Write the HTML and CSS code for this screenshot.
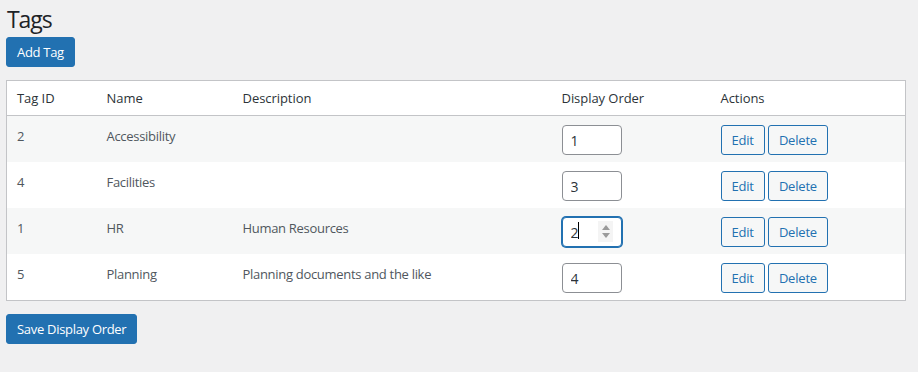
FILE: index.html
```html
<!DOCTYPE html>
<html lang="en">
<head>
<meta charset="utf-8">
<title>Tags</title>
<link rel="stylesheet" href="styles.css">
</head>
<body>
<div class="wrap">
  <h1 class="page-title">Tags</h1>
  <a class="button button-primary" href="#">Add Tag</a>
  <table class="widefat striped">
    <colgroup>
      <col class="c-id"><col class="c-name"><col class="c-desc"><col class="c-order"><col class="c-actions">
    </colgroup>
    <thead>
      <tr><th>Tag ID</th><th>Name</th><th>Description</th><th>Display Order</th><th>Actions</th></tr>
    </thead>
    <tbody>
      <tr>
        <td>2</td><td>Accessibility</td><td></td>
        <td><span class="num"><input class="order" type="number" value="1"></span></td>
        <td><a class="button" href="#">Edit</a> <a class="button" href="#">Delete</a></td>
      </tr>
      <tr>
        <td>4</td><td>Facilities</td><td></td>
        <td><span class="num"><input class="order" type="number" value="3"></span></td>
        <td><a class="button" href="#">Edit</a> <a class="button" href="#">Delete</a></td>
      </tr>
      <tr>
        <td>1</td><td>HR</td><td>Human Resources</td>
        <td><span class="num is-focused"><input class="order" type="number" value="2"><span class="caret"></span><span class="spin"><span class="up"></span><span class="down"></span></span></span></td>
        <td><a class="button" href="#">Edit</a> <a class="button" href="#">Delete</a></td>
      </tr>
      <tr>
        <td>5</td><td>Planning</td><td>Planning documents and the like</td>
        <td><span class="num"><input class="order" type="number" value="4"></span></td>
        <td><a class="button" href="#">Edit</a> <a class="button" href="#">Delete</a></td>
      </tr>
    </tbody>
  </table>
  <div class="submit">
    <a class="button button-primary" href="#">Save Display Order</a>
  </div>
</div>
</body>
</html>
```
FILE: styles.css
```css
html, body {
  margin: 0;
  padding: 0;
  background: #f0f0f1;
}
body {
  font-family: "Open Sans", "Noto Sans", "Liberation Sans", sans-serif;
  font-size: 13px;
  line-height: 1.4;
  letter-spacing: -0.3px;
  color: #3c434a;
}
.wrap {
  padding: 4px 12px 0 6px;
}
.page-title {
  font-size: 23px;
  font-weight: 400;
  line-height: 30px;
  letter-spacing: -1.1px;
  margin: 0 0 3px 1px;
  color: #1d2327;
}
.button {
  display: inline-block;
  box-sizing: border-box;
  height: 30px;
  line-height: 28px;
  padding: 0 10px;
  font-size: 13px;
  letter-spacing: -0.2px;
  text-decoration: none;
  border: 1px solid #2271b1;
  border-radius: 3px;
  background: #f6f7f7;
  color: #2271b1;
  vertical-align: top;
  white-space: nowrap;
}
.button-primary {
  background: #2271b1;
  color: #fff;
  letter-spacing: -0.3px;
}
.widefat {
  margin-top: 13px;
  width: 100%;
  table-layout: fixed;
  border-collapse: collapse;
  border: 1px solid #c3c4c7;
  background: #fff;
}
.c-id { width: 90px; }
.c-name { width: 136px; }
.c-desc { width: 319px; }
.c-order { width: 159px; }
.widefat th {
  text-align: left;
  font-weight: 400;
  letter-spacing: -0.05px;
  color: #2c3338;
  padding: 8px 10px;
  height: 18px;
  line-height: 18px;
  border-bottom: 1px solid #c3c4c7;
}
.widefat td {
  padding: 9px 10px 7px;
  height: 30px;
  line-height: 22px;
  vertical-align: top;
  color: #50575e;
}
.striped tbody tr:nth-child(odd) {
  background: #f6f7f7;
}
.num {
  position: relative;
  display: inline-block;
  vertical-align: top;
}
.order {
  box-sizing: border-box;
  width: 60px;
  height: 30px;
  margin: 0;
  padding: 0 8px;
  font-family: inherit;
  font-size: 14px;
  letter-spacing: 0;
  color: #2c3338;
  background: #fff;
  border: 1px solid #8c8f94;
  border-radius: 4px;
  outline: none;
  -moz-appearance: textfield;
  appearance: textfield;
  display: block;
}
.order::-webkit-inner-spin-button,
.order::-webkit-outer-spin-button {
  -webkit-appearance: none;
  margin: 0;
}
.is-focused .order {
  border-color: #2271b1;
  box-shadow: 0 0 0 1px #2271b1;
}
.caret {
  position: absolute;
  left: 16px;
  top: 5px;
  width: 1px;
  height: 17px;
  background: #000;
}
.spin {
  position: absolute;
  left: 36px;
  top: 4px;
  width: 15px;
  height: 21px;
  background: #f4f4f4;
}
.spin .up, .spin .down {
  position: absolute;
  left: 4px;
  width: 0;
  height: 0;
  border-left: 4px solid transparent;
  border-right: 4px solid transparent;
}
.spin .up {
  top: 4px;
  border-bottom: 5px solid #9a9a9a;
}
.spin .down {
  bottom: 4px;
  border-top: 5px solid #9a9a9a;
}
.submit {
  margin-top: 13px;
}
```
